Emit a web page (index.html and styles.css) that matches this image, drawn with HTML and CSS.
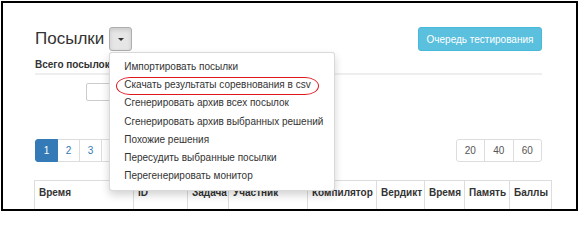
FILE: index.html
```html
<!DOCTYPE html>
<html lang="ru">
<head>
<meta charset="utf-8">
<title>Посылки</title>
<link rel="stylesheet" href="styles.css">
</head>
<body>
<div class="page">
  <div class="header">
    <div class="title-group">
      <h3 class="title">Посылки</h3>
      <div class="btn-group">
        <button class="btn-caret" type="button"><span class="caret"></span></button>
        <ul class="menu">
          <li>Импортировать посылки</li>
          <li class="marked">Скачать результаты соревнования в csv<span class="ring"></span></li>
          <li>Сгенерировать архив всех посылок</li>
          <li>Сгенерировать архив выбранных решений</li>
          <li>Похожие решения</li>
          <li>Пересудить выбранные посылки</li>
          <li>Перегенерировать монитор</li>
        </ul>
      </div>
    </div>
    <button class="btn-info" type="button">Очередь тестирования</button>
  </div>

  <div class="total">Всего посылок</div>

  <div class="search"><input class="search-input" type="text"></div>

  <div class="pager-row">
    <ul class="pagination">
      <li class="active">1</li>
      <li>2</li>
      <li>3</li>
      <li class="blank"></li>
    </ul>
    <ul class="pagination sizes">
      <li>20</li>
      <li>40</li>
      <li>60</li>
    </ul>
  </div>

  <table class="runs">
    <colgroup>
      <col style="width:99px"><col style="width:54px"><col style="width:41px"><col style="width:79px"><col style="width:69px"><col style="width:48px"><col style="width:40px"><col style="width:45px"><col style="width:42px">
    </colgroup>
    <thead>
      <tr>
        <th>Время</th><th>ID</th><th>Задача</th><th>Участник</th><th>Компилятор</th><th>Вердикт</th><th>Время</th><th>Память</th><th>Баллы</th>
      </tr>
    </thead>
  </table>
</div>
</body>
</html>
```

FILE: styles.css
```css
* { box-sizing: border-box; }

html, body {
  margin: 0;
  padding: 0;
  background: #fff;
}

body {
  font-family: "Liberation Sans", Arial, Helvetica, sans-serif;
  color: #333;
  font-size: 10px;
}

.page {
  width: 577px;
  height: 210px;
  margin: 1px 0 0 1px;
  border: 2px solid #000;
  padding: 24px 34px 0 32px;
  overflow: hidden;
}

.header {
  display: flex;
  justify-content: space-between;
  align-items: center;
  height: 24px;
}

.title-group {
  display: flex;
  align-items: center;
  gap: 5px;
}

.title {
  margin: 0;
  font-size: 17px;
  font-weight: normal;
  line-height: 24px;
  color: #333;
}

.btn-group {
  position: relative;
  z-index: 5;
}

.btn-caret {
  display: flex;
  align-items: center;
  justify-content: center;
  width: 23px;
  height: 24px;
  padding: 0;
  background: #e6e6e6;
  border: 1px solid #adadad;
  border-radius: 3px;
  box-shadow: inset 0 2px 4px rgba(0, 0, 0, 0.125);
}

.caret {
  width: 0;
  height: 0;
  border-top: 3px solid #333;
  border-left: 3px solid transparent;
  border-right: 3px solid transparent;
}

.menu {
  position: absolute;
  top: 25px;
  left: 0;
  width: 226px;
  margin: 0;
  padding: 5px 0;
  list-style: none;
  background: #fff;
  border: 1px solid rgba(0, 0, 0, 0.15);
  border-radius: 3px;
  box-shadow: 0 4px 9px rgba(0, 0, 0, 0.175);
}

.menu li {
  position: relative;
  padding: 0 14px;
  height: 18.2px;
  line-height: 18px;
  font-size: 10px;
  color: #333;
  white-space: nowrap;
}

.ring {
  position: absolute;
  left: 6px;
  top: 1px;
  width: 203px;
  height: 18px;
  border: 1px solid #e0161e;
  border-radius: 14px / 9px;
}

.btn-info {
  width: 124px;
  height: 24px;
  padding: 0;
  background: #5bc0de;
  border: 1px solid #46b8da;
  border-radius: 3px;
  color: #fff;
  font-family: inherit;
  font-size: 10px;
}

.total {
  margin-top: 6px;
  height: 18px;
  line-height: 16px;
  font-weight: bold;
  font-size: 10px;
  color: #333;
  border-bottom: 2px solid #eee;
}

.search {
  margin-top: 8px;
  padding-left: 51px;
  height: 18px;
}

.search-input {
  display: block;
  width: 90px;
  height: 18px;
  border: 1px solid #ccc;
  border-radius: 2px;
  padding: 0;
}

.pager-row {
  display: flex;
  justify-content: space-between;
  margin-top: 38px;
}

.pagination {
  display: flex;
  margin: 0;
  padding: 0;
  list-style: none;
}

.pagination li {
  width: 23px;
  height: 23px;
  line-height: 21px;
  text-align: center;
  border: 1px solid #ddd;
  margin-left: -1px;
  color: #337ab7;
  font-size: 10px;
  background: #fff;
}

.pagination li:first-child {
  margin-left: 0;
  border-radius: 3px 0 0 3px;
}

.pagination li:last-child {
  border-radius: 0 3px 3px 0;
}

.pagination li.active {
  background: #337ab7;
  border-color: #337ab7;
  color: #fff;
  position: relative;
  z-index: 1;
}

.sizes li {
  width: 29.5px;
  color: #555;
}

.runs {
  margin: 18px 0 0 -1px;
  border-collapse: collapse;
  table-layout: fixed;
  width: 517px;
}

.runs th {
  border: 1px solid #ddd;
  border-bottom-width: 2px;
  padding: 5px 4px 0;
  height: 34px;
  vertical-align: top;
  line-height: 14px;
  text-align: left;
  font-weight: bold;
  font-size: 10px;
  color: #333;
  white-space: nowrap;
  overflow: hidden;
}
```
